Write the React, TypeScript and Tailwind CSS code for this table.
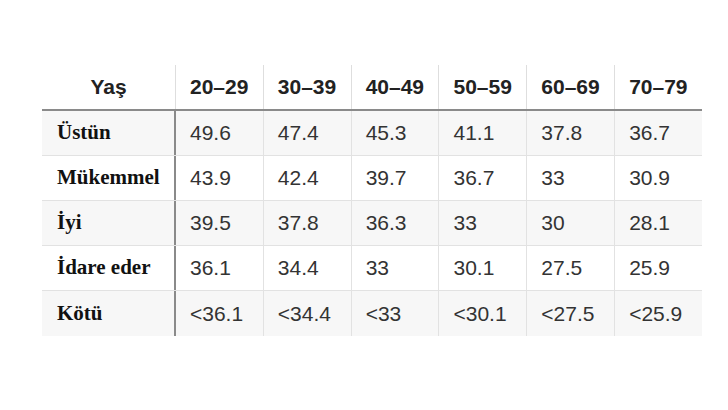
import React from "react";

const cols = ["20–29", "30–39", "40–49", "50–59", "60–69", "70–79"];
const rows: { label: string; vals: string[] }[] = [
  { label: "Üstün", vals: ["49.6", "47.4", "45.3", "41.1", "37.8", "36.7"] },
  { label: "Mükemmel", vals: ["43.9", "42.4", "39.7", "36.7", "33", "30.9"] },
  { label: "İyi", vals: ["39.5", "37.8", "36.3", "33", "30", "28.1"] },
  { label: "İdare eder", vals: ["36.1", "34.4", "33", "30.1", "27.5", "25.9"] },
  { label: "Kötü", vals: ["<36.1", "<34.4", "<33", "<30.1", "<27.5", "<25.9"] },
];

export default function App() {
  return (
    <div className="w-[728px] h-[410px] bg-white pl-[42px] pt-[65px] box-border">
      <div className="w-[660px] flex flex-col">
        <div className="flex h-[46px] border-b-2 border-[#8a8a8a] box-border" style={{ fontFamily: '"Liberation Sans", Arial, sans-serif' }}>
          <div className="w-[134px] shrink-0 border-r border-[#dedede] flex items-center justify-center text-[21px] font-bold text-[#222]">
            Yaş
          </div>
          {cols.map((c, i) => (
            <div
              key={c}
              className={`flex-1 flex items-center pl-[14px] text-[21px] font-bold text-[#222] ${i < cols.length - 1 ? "border-r border-[#dedede]" : ""}`}
            >
              {c}
            </div>
          ))}
        </div>
        {rows.map((r, ri) => (
          <div
            key={r.label}
            className={`flex h-[45px] box-border ${ri % 2 === 0 ? "bg-[#f7f7f7]" : "bg-white"} ${ri < rows.length - 1 ? "border-b border-[#e2e2e2]" : ""}`}
          >
            <div
              className="w-[134px] shrink-0 border-r-2 border-[#8a8a8a] flex items-center pl-[15px] text-[21px] font-bold text-[#111]"
              style={{ fontFamily: '"Liberation Serif", "Times New Roman", serif' }}
            >
              {r.label}
            </div>
            {r.vals.map((v, i) => (
              <div
                key={i}
                className={`flex-1 flex items-center pl-[14px] text-[21px] text-[#333] ${i < r.vals.length - 1 ? "border-r border-[#e2e2e2]" : ""}`}
                style={{ fontFamily: '"Liberation Sans", Arial, sans-serif' }}
              >
                {v}
              </div>
            ))}
          </div>
        ))}
      </div>
    </div>
  );
}
